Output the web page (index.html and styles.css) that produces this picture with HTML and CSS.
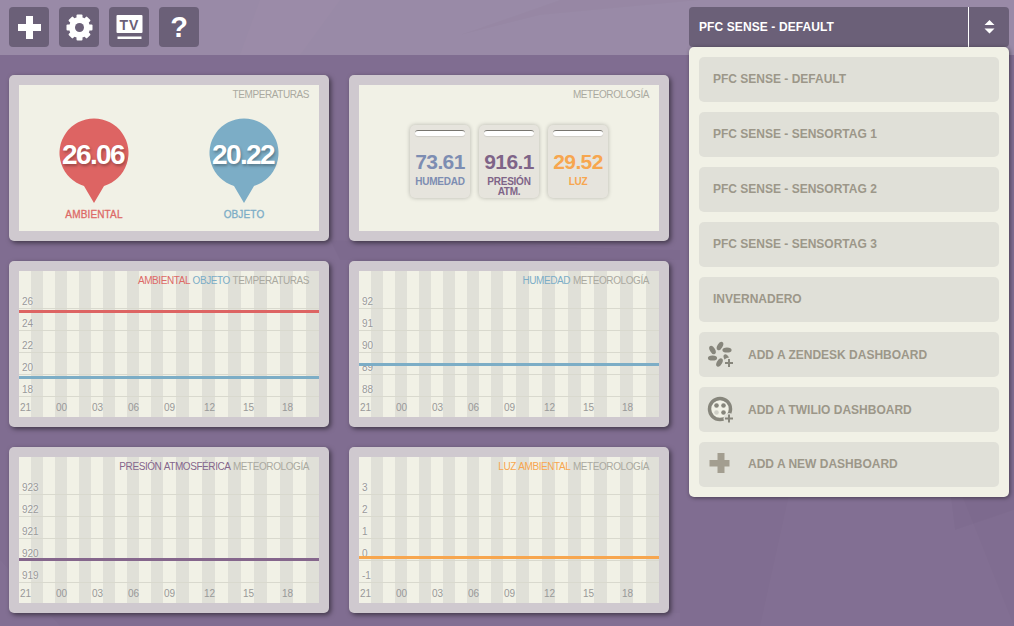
FILE: index.html
```html
<!DOCTYPE html>
<html lang="es">
<head>
<meta charset="utf-8">
<title>Dashboard</title>
<link rel="stylesheet" href="styles.css">
</head>
<body>
<svg class="backdrop" width="1014" height="626" viewBox="0 0 1014 626" aria-hidden="true">
  <polygon class="tint-light" points="760,626 790,490 960,490 1014,626"/>
  <polygon class="tint-dark" points="460,35 560,0 700,0 540,15"/>
  <polygon class="tint-light" points="0,560 60,626 0,626"/>
  <polygon class="tint-dark" points="955,530 1014,510 1014,490 950,490"/>
  <polygon class="tint-light" points="240,55 260,0 340,0 300,55"/>
  <polygon class="tint-dark" points="330,240 680,250 680,260 340,260"/>
  <polygon class="tint-light" points="400,613 680,613 680,626 400,626"/>
</svg>
<header class="topbar">
  <nav class="tools">
    <button class="tool" aria-label="Añadir">
      <svg width="23" height="23" viewBox="0 0 23 23"><path class="white" d="M8 0h7v8h8v7h-8v8H8v-8H0V8h8z"/></svg>
    </button>
    <button class="tool" aria-label="Ajustes">
      <svg width="27" height="27" viewBox="0 0 27 27">
        <g class="white">
          <circle cx="13.5" cy="13.5" r="10.5"/>
          <rect x="10.5" y="0.5" width="6" height="26" rx="1"/>
          <rect x="10.5" y="0.5" width="6" height="26" rx="1" transform="rotate(45 13.5 13.5)"/>
          <rect x="10.5" y="0.5" width="6" height="26" rx="1" transform="rotate(90 13.5 13.5)"/>
          <rect x="10.5" y="0.5" width="6" height="26" rx="1" transform="rotate(135 13.5 13.5)"/>
        </g>
        <circle class="hole" cx="13.5" cy="13.5" r="4.5"/>
      </svg>
    </button>
    <button class="tool" aria-label="TV">
      <svg width="27" height="25" viewBox="0 0 27 25">
        <rect class="white" x="0.5" y="0" width="26" height="18" rx="1"/>
        <rect class="white" x="1.5" y="21.5" width="24" height="2.5"/>
        <text class="tv-mark" x="13.5" y="14.5" text-anchor="middle">TV</text>
      </svg>
    </button>
    <button class="tool tool-help" aria-label="Ayuda">?</button>
  </nav>
  <div class="picker">
    <div class="picker-head">
      <span class="picker-name">PFC SENSE - DEFAULT</span>
      <span class="picker-toggle">
        <svg width="11" height="14" viewBox="0 0 11 14"><path class="white" d="M5.5 0l5 5H.5zM.5 8.500h10l-5 5z"/></svg>
      </span>
    </div>
    <ul class="picker-menu">
      <li class="entry">PFC SENSE - DEFAULT</li>
      <li class="entry">PFC SENSE - SENSORTAG 1</li>
      <li class="entry">PFC SENSE - SENSORTAG 2</li>
      <li class="entry">PFC SENSE - SENSORTAG 3</li>
      <li class="entry">INVERNADERO</li>
      <li class="entry entry-add">
        <svg class="entry-icon" width="28" height="28" viewBox="0 0 28 28">
          <g class="grey">
            <ellipse cx="14" cy="5" rx="2.600" ry="4.600" transform="rotate(30 14 5)"/>
            <ellipse cx="21" cy="9" rx="2.600" ry="4.600" transform="rotate(90 21 9)"/>
            <ellipse cx="20.500" cy="17" rx="2.400" ry="4" transform="rotate(150 20.500 17)"/>
            <ellipse cx="13.500" cy="21.500" rx="2.600" ry="4.600" transform="rotate(30 13.500 21.500)"/>
            <ellipse cx="6.500" cy="17" rx="2.600" ry="4.600" transform="rotate(90 6.500 17)"/>
            <ellipse cx="6.500" cy="9" rx="2.600" ry="4.600" transform="rotate(150 6.500 9)"/>
          </g>
          <circle class="patch" cx="23" cy="22" r="5.500"/>
          <path class="grey" d="M19 21h3v-3h2v3h3v2h-3v3h-2v-3h-3z"/>
        </svg>
        ADD A ZENDESK DASHBOARD
      </li>
      <li class="entry entry-add">
        <svg class="entry-icon" width="28" height="28" viewBox="0 0 28 28">
          <circle class="ring" cx="14" cy="13" r="10.500"/>
          <circle class="dot-dark" cx="10.500" cy="9.500" r="2.300"/>
          <circle class="dot-dark" cx="17.500" cy="9.500" r="2.300"/>
          <circle class="dot-light" cx="10.500" cy="16.500" r="2.300"/>
          <circle class="dot-dark" cx="17.500" cy="16.500" r="2.300"/>
          <circle class="patch" cx="23" cy="22.500" r="5.500"/>
          <path class="grey" d="M19 21.500h3v-3h2v3h3v2h-3v3h-2v-3h-3z"/>
        </svg>
        ADD A TWILIO DASHBOARD
      </li>
      <li class="entry entry-add entry-new">
        <svg class="entry-icon" width="28" height="28" viewBox="0 0 28 28"><path class="tan" d="M10.500 3h7v7h5v6.500h-5V23h-7v-6.500H2.500V10h8z" transform="translate(1 0)"/></svg>
        ADD A NEW DASHBOARD
      </li>
    </ul>
  </div>
</header>

<main class="board">
  <section class="card">
    <div class="panel">
      <h2 class="caption">TEMPERATURAS</h2>
      <div class="pins">
        <figure class="pin pin-red">
          <div class="pin-body">
            <svg class="pin-shape" width="70" height="86" viewBox="0 0 70 86"><path d="M25 68A34.500 34.500 0 1 1 45 68L35 85z"/></svg>
            <span class="pin-value">26.06</span>
          </div>
          <figcaption class="pin-label">AMBIENTAL</figcaption>
        </figure>
        <figure class="pin pin-blue">
          <div class="pin-body">
            <svg class="pin-shape" width="70" height="86" viewBox="0 0 70 86"><path d="M25 68A34.500 34.500 0 1 1 45 68L35 85z"/></svg>
            <span class="pin-value">20.22</span>
          </div>
          <figcaption class="pin-label">OBJETO</figcaption>
        </figure>
      </div>
    </div>
  </section>

  <section class="card">
    <div class="panel">
      <h2 class="caption">METEOROLOGÍA</h2>
      <div class="tiles">
        <div class="tile tile-blue"><i class="slot"></i><b class="tile-value">73.61</b><span class="tile-label">HUMEDAD</span></div>
        <div class="tile tile-purple"><i class="slot"></i><b class="tile-value">916.1</b><span class="tile-label">PRESIÓN ATM.</span></div>
        <div class="tile tile-orange"><i class="slot"></i><b class="tile-value">29.52</b><span class="tile-label">LUZ</span></div>
      </div>
    </div>
  </section>

  <section class="card">
    <div class="plot">
      <h2 class="caption"><span class="c-red">AMBIENTAL</span> <span class="c-blue">OBJETO</span> TEMPERATURAS</h2>
      <div class="row"><span>26</span></div>
      <div class="row"><span>24</span></div>
      <div class="row"><span>22</span></div>
      <div class="row"><span>20</span></div>
      <div class="row"><span>18</span></div>
      <div class="axis"><span>21</span><span>00</span><span>03</span><span>06</span><span>09</span><span>12</span><span>15</span><span>18</span></div>
      <i class="trace trace-red"></i>
      <i class="trace trace-blue"></i>
    </div>
  </section>

  <section class="card">
    <div class="plot">
      <h2 class="caption"><span class="c-blue">HUMEDAD</span> METEOROLOGÍA</h2>
      <div class="row"><span>92</span></div>
      <div class="row"><span>91</span></div>
      <div class="row"><span>90</span></div>
      <div class="row"><span>89</span></div>
      <div class="row"><span>88</span></div>
      <div class="axis"><span>21</span><span>00</span><span>03</span><span>06</span><span>09</span><span>12</span><span>15</span><span>18</span></div>
      <i class="trace trace-humid"></i>
    </div>
  </section>

  <section class="card">
    <div class="plot">
      <h2 class="caption"><span class="c-purple">PRESIÓN ATMOSFÉRICA</span> METEOROLOGÍA</h2>
      <div class="row"><span>923</span></div>
      <div class="row"><span>922</span></div>
      <div class="row"><span>921</span></div>
      <div class="row"><span>920</span></div>
      <div class="row"><span>919</span></div>
      <div class="axis"><span>21</span><span>00</span><span>03</span><span>06</span><span>09</span><span>12</span><span>15</span><span>18</span></div>
      <i class="trace trace-purple"></i>
    </div>
  </section>

  <section class="card">
    <div class="plot">
      <h2 class="caption"><span class="c-orange">LUZ AMBIENTAL</span> METEOROLOGÍA</h2>
      <div class="row"><span>3</span></div>
      <div class="row"><span>2</span></div>
      <div class="row"><span>1</span></div>
      <div class="row"><span>0</span></div>
      <div class="row"><span>-1</span></div>
      <div class="axis"><span>21</span><span>00</span><span>03</span><span>06</span><span>09</span><span>12</span><span>15</span><span>18</span></div>
      <i class="trace trace-orange"></i>
    </div>
  </section>
</main>
</body>
</html>
```

FILE: styles.css
```css
* { box-sizing: border-box; }

html, body { margin: 0; padding: 0; }

body {
  position: relative;
  width: 1014px;
  height: 626px;
  overflow: hidden;
  background: #806d91;
  font-family: "Liberation Sans", Arial, sans-serif;
}

.backdrop { position: absolute; left: 0; top: 0; }
.tint-light { fill: #fff; opacity: .02; }
.tint-dark { fill: #000; opacity: .02; }

.white { fill: #fff; }
.hole { fill: #6b6078; }
.grey { fill: #87867c; }
.tan { fill: #a39e90; }

/* top bar */
.topbar {
  position: relative;
  height: 55px;
  padding: 7px 5px 0 9px;
  display: flex;
  justify-content: space-between;
  background: rgba(255, 255, 255, .2);
}

.tools { display: flex; gap: 10px; }

.tool {
  width: 40px;
  height: 40px;
  padding: 0;
  border: 0;
  border-radius: 4px;
  background: #6b6078;
  display: flex;
  align-items: center;
  justify-content: center;
}

.tool-help {
  color: #fff;
  font: bold 29px/40px "Liberation Sans", Arial, sans-serif;
}

.tv-mark {
  fill: #6b6078;
  font: bold 14px "Liberation Sans", Arial, sans-serif;
  letter-spacing: 1px;
}

/* dashboard picker */
.picker { position: relative; width: 320px; }

.picker-head {
  height: 40px;
  display: flex;
  align-items: center;
  border-radius: 4px;
  background: #6b6078;
  color: #fff;
  font-size: 12px;
  font-weight: bold;
}

.picker-name { flex: 1; padding-left: 10px; letter-spacing: .1px; }

.picker-toggle {
  width: 41px;
  height: 40px;
  border-left: 1px solid #fff;
  display: flex;
  align-items: center;
  justify-content: center;
}

.picker-menu {
  position: absolute;
  left: 0;
  top: 40px;
  width: 320px;
  margin: 0;
  padding: 10px;
  list-style: none;
  display: flex;
  flex-direction: column;
  gap: 10px;
  border-radius: 5px;
  background: #f1f1e6;
  box-shadow: 1px 1px 4px rgba(0, 0, 0, .45);
}

.entry {
  height: 45px;
  padding: 0 14px 2px;
  display: flex;
  align-items: center;
  border-radius: 5px;
  background: #e0e0d8;
  color: #9c9789;
  font-size: 12px;
  font-weight: bold;
}

.entry-add { padding-left: 7px; padding-bottom: 0; }
.entry-new { padding-bottom: 2px; }
.entry-icon { margin-right: 14px; flex: none; }

.ring { fill: #f1f1e6; stroke: #87867c; stroke-width: 3.5; }
.dot-dark { fill: #87867c; }
.dot-light { fill: #cfcfc6; }
.patch { fill: #e0e0d8; }

/* cards */
.board {
  position: relative;
  width: 660px;
  padding: 20px 0 0 9px;
  display: grid;
  grid-template-columns: 320px 320px;
  grid-auto-rows: 166px;
  gap: 20px;
}

.card {
  padding: 10px;
  border-radius: 5px;
  background: #cfc9cf;
  box-shadow: 2px 2px 5px rgba(0, 0, 0, .5);
}

.panel {
  height: 146px;
  background: #f1f1e6;
}

.caption {
  margin: 0;
  height: 16px;
  padding: 4px 10px 0 0;
  text-align: right;
  color: #aaa9a0;
  font-size: 10px;
  font-weight: normal;
  line-height: 12px;
  letter-spacing: -.42px;
  word-spacing: .5px;
  white-space: nowrap;
}

.c-red { color: #dd6a67; }
.c-blue { color: #7cadc6; }
.c-purple { color: #85668c; }
.c-orange { color: #f7a64f; }

/* pins */
.pins { display: flex; padding-top: 17px; }

.pin {
  width: 150px;
  margin: 0;
  display: flex;
  flex-direction: column;
  align-items: center;
}

.pin-body { position: relative; width: 70px; height: 86px; }
.pin-shape { display: block; }
.pin-red path { fill: #dd6463; }
.pin-blue path { fill: #7cadc6; }

.pin-value {
  position: absolute;
  left: -11px;
  right: -9px;
  top: 20px;
  text-align: center;
  color: #fff;
  font-size: 28px;
  font-weight: bold;
  line-height: 34px;
  letter-spacing: -1.6px;
  text-shadow: 1px 2px 3px rgba(0, 0, 0, .3);
}

.pin-label {
  margin-top: 5px;
  font-size: 10px;
  line-height: 12px;
  letter-spacing: .15px;
  -webkit-text-stroke: .3px currentColor;
}

.pin-red .pin-label { color: #dd6a67; }
.pin-blue .pin-label { color: #7cadc6; }

/* tiles */
.tiles {
  display: flex;
  justify-content: flex-start;
  gap: 9px;
  padding: 24px 0 0 51px;
}

.tile {
  width: 60px;
  height: 73px;
  padding-top: 5px;
  display: flex;
  flex-direction: column;
  align-items: center;
  border-radius: 5px;
  background: #e6e4dd;
  box-shadow: 0 0 4px rgba(0, 0, 0, .25);
  text-align: center;
}

.slot {
  display: block;
  width: 50px;
  height: 6px;
  border-radius: 3px;
  border-top: 1px solid #77756f;
  background: #fff;
  box-shadow: 0 1px 1px rgba(0, 0, 0, .1);
}

.tile-value {
  margin-top: 14px;
  font-size: 21px;
  line-height: 24px;
  letter-spacing: -.6px;
}

.tile-label {
  margin-top: 3px;
  font-size: 10px;
  line-height: 10px;
  font-weight: bold;
  letter-spacing: -.25px;
}

.tile-blue { color: #7d8db2; }
.tile-purple { color: #7f6488; }
.tile-orange { color: #f7a64f; }

/* plots */
.plot {
  position: relative;
  height: 146px;
  background:
    repeating-linear-gradient(90deg, #f1f1e6 0 12px, #e0e0d8 12px 24px) left top / 144px 100% no-repeat,
    repeating-linear-gradient(90deg, #f1f1e6 0 13px, #e0e0d8 13px 26px) right top / 156px 100% no-repeat;
}

.row {
  height: 22px;
  padding-left: 3px;
  display: flex;
  align-items: flex-end;
  border-bottom: 1px solid #d9d9ce;
  color: #999;
  font-size: 10px;
  line-height: 12px;
  text-shadow: 0 0 2px #fff;
}

.axis {
  padding-left: 1px;
  display: grid;
  grid-template-columns: 36px 36px 36px 36px 40px 39px 39px auto;
  color: #999;
  font-size: 10px;
  line-height: 22px;
}

.trace { position: absolute; left: 0; right: 0; height: 3px; }
.trace-red { top: 39px; background: #dd6463; }
.trace-blue { top: 105px; background: #7cadc6; }
.trace-humid { top: 92px; background: #7cadc6; }
.trace-purple { top: 101px; background: #85668c; }
.trace-orange { top: 99px; background: #f7a64f; }
```
